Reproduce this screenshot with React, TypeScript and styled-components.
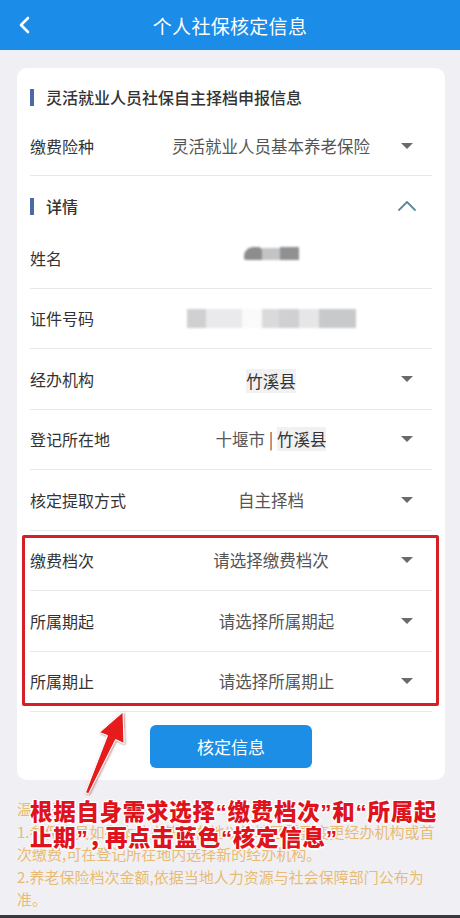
import React from "react";
import styled, { createGlobalStyle } from "styled-components";

const GlobalStyle = createGlobalStyle`
  html, body { margin: 0; padding: 0; background: #f0f0f4; }
  body { font-family: "Noto Sans CJK SC", "Noto Sans", sans-serif; }
  * { box-sizing: border-box; }
`;

const Page = styled.div`
  position: relative;
  width: 460px;
  height: 918px;
  overflow: hidden;
  background: #f0f0f4;
  display: flex;
  flex-direction: column;
`;

const Header = styled.header`
  height: 50px;
  background: #1b8ce8;
  display: grid;
  grid-template-columns: 50px 1fr 50px;
  align-items: center;
`;

const BackButton = styled.div`
  display: flex;
  align-items: center;
  justify-content: center;
  height: 50px;
`;

const Title = styled.h1`
  margin: 0;
  text-align: center;
  color: #ffffff;
  font-size: 19px;
  font-weight: 400;
  letter-spacing: 0.3px;
`;

const Card = styled.section`
  margin: 18px 15px 0 17px;
  background: #ffffff;
  border-radius: 10px;
  padding: 0 13px 12px;
  display: flex;
  flex-direction: column;
`;

const SectionHeader = styled.div<{ $pt: number; $pb: number }>`
  display: flex;
  align-items: center;
  padding: ${(p) => p.$pt}px 0 ${(p) => p.$pb}px;
`;

const SectionBar = styled.span`
  width: 4px;
  height: 17px;
  background: #4a6aa6;
  margin-right: 12px;
  flex: none;
`;

const SectionTitle = styled.span`
  flex: 1;
  font-size: 16px;
  line-height: 22px;
  font-weight: 500;
  color: #333333;
`;

const Row = styled.div<{ $h: number; $border?: boolean }>`
  height: ${(p) => p.$h}px;
  display: flex;
  align-items: center;
  border-bottom: ${(p) => (p.$border === false ? "none" : "1px solid #e8e8ea")};
`;

const Label = styled.span`
  width: 125px;
  flex: none;
  font-size: 16px;
  color: #333333;
`;

const Value = styled.span`
  flex: 1;
  display: flex;
  justify-content: center;
  align-items: center;
  font-size: 16.5px;
  color: #555555;
  white-space: nowrap;
`;

const Pasted = styled.span`
  background: #f1f1f1;
  color: #333;
`;

const CaretBox = styled.span`
  width: 40px;
  margin-right: 5px;
  flex: none;
  display: flex;
  justify-content: center;
  align-items: center;
`;

const Caret = styled.span`
  width: 0;
  height: 0;
  border-left: 6px solid transparent;
  border-right: 6px solid transparent;
  border-top: 6px solid #6a6a6a;
`;

const Redact = styled.span`
  display: flex;
  align-items: center;
  filter: blur(0.8px);
`;

const RedactBlock = styled.span<{ $w: number; $h: number; $c: string; $r?: string }>`
  display: block;
  width: ${(p) => p.$w}px;
  height: ${(p) => p.$h}px;
  background: ${(p) => p.$c};
  border-radius: ${(p) => p.$r || "0"};
`;

const HighlightGroup = styled.div`
  position: relative;
  display: flex;
  flex-direction: column;
`;

const HighlightFrame = styled.div`
  position: absolute;
  top: 4.5px;
  bottom: 6px;
  left: -8px;
  right: -7px;
  border: 3px solid #d51f27;
  border-radius: 2px;
  pointer-events: none;
`;

const ButtonWrap = styled.div`
  display: flex;
  justify-content: center;
  padding-top: 13px;
`;

const PrimaryButton = styled.button`
  width: 162px;
  height: 43px;
  border: none;
  border-radius: 6px;
  background: #1c8ee6;
  color: #ffffff;
  font-family: "Noto Sans CJK SC", sans-serif;
  font-size: 17px;
`;

const Tips = styled.div`
  padding: 18px 20px 0 17px;
  color: #e8bb74;
  font-size: 15px;
  line-height: 22.5px;
`;

const TipLine = styled.p`
  margin: 0;
`;

const BottomEdge = styled.div`
  margin-top: auto;
  height: 3px;
  background: #3a3a3a;
`;

const Annotation = styled.div`
  position: absolute;
  left: 30px;
  top: 800px;
  width: 425px;
  font-family: "Liberation Sans", "Noto Sans CJK SC", sans-serif;
  font-size: 22.5px;
  font-weight: 900;
  line-height: 25.5px;
  letter-spacing: 0.7px;
  color: #e0121b;
  text-shadow:
    1.5px 0 0 #fff, -1.5px 0 0 #fff, 0 1.5px 0 #fff, 0 -1.5px 0 #fff,
    1px 1px 0 #fff, -1px -1px 0 #fff, 1px -1px 0 #fff, -1px 1px 0 #fff;
`;

const NarrowComma = styled.span`
  letter-spacing: -6px;
`;

const ArrowSvg = styled.svg`
  position: absolute;
  left: 80px;
  top: 705px;
  overflow: visible;
`;

const BackIcon = () => (
  <svg width="14" height="18" viewBox="0 0 14 18">
    <polyline points="10,2 3,9 10,16" fill="none" stroke="#fff" strokeWidth="2.6" strokeLinecap="round" strokeLinejoin="round" />
  </svg>
);

const UpChevron = () => (
  <svg width="20" height="12" viewBox="0 0 20 12">
    <polyline points="2,10 10,2 18,10" fill="none" stroke="#5a8a99" strokeWidth="1.8" strokeLinecap="round" strokeLinejoin="round" />
  </svg>
);

type SelectRowProps = { label: string; h: number; children: React.ReactNode; border?: boolean; caret?: boolean };

const SelectRow = ({ label, h, children, border, caret = true }: SelectRowProps) => (
  <Row $h={h} $border={border}>
    <Label>{label}</Label>
    <Value>{children}</Value>
    <CaretBox>{caret ? <Caret /> : null}</CaretBox>
  </Row>
);

export default function App() {
  return (
    <>
      <GlobalStyle />
      <Page>
        <Header>
          <BackButton>
            <BackIcon />
          </BackButton>
          <Title>个人社保核定信息</Title>
          <span />
        </Header>

        <Card>
          <SectionHeader $pt={18} $pb={9}>
            <SectionBar />
            <SectionTitle>灵活就业人员社保自主择档申报信息</SectionTitle>
          </SectionHeader>
          <SelectRow label="缴费险种" h={59}>灵活就业人员基本养老保险</SelectRow>

          <SectionHeader $pt={19} $pb={11}>
            <SectionBar />
            <SectionTitle>详情</SectionTitle>
            <CaretBox>
              <UpChevron />
            </CaretBox>
          </SectionHeader>

          <SelectRow label="姓名" h={60.5} caret={false}>
            <Redact style={{ marginTop: -8 }}>
              <RedactBlock $w={18} $h={13} $c="#8d8d8d" $r="9px 4px 0 2px" />
              <RedactBlock $w={18} $h={12} $c="#c2c4c6" />
              <RedactBlock $w={19} $h={13} $c="#8f9092" />
            </Redact>
          </SelectRow>
          <SelectRow label="证件号码" h={60.5} caret={false}>
            <Redact>
              <RedactBlock $w={19} $h={19} $c="#d0d0d2" />
              <RedactBlock $w={36} $h={19} $c="#eaeaec" />
              <RedactBlock $w={20} $h={19} $c="#fafafa" />
              <RedactBlock $w={17} $h={19} $c="#dadadc" />
              <RedactBlock $w={20} $h={19} $c="#cfd0d2" />
              <RedactBlock $w={20} $h={19} $c="#e6e6e8" />
              <RedactBlock $w={37} $h={19} $c="#c8c9cb" />
            </Redact>
          </SelectRow>
          <SelectRow label="经办机构" h={60.5}>
            <Pasted style={{ marginTop: 4 }}>竹溪县</Pasted>
          </SelectRow>
          <SelectRow label="登记所在地" h={60.5}>
            十堰市 |&nbsp;<Pasted>竹溪县</Pasted>
          </SelectRow>
          <SelectRow label="核定提取方式" h={60.5}>自主择档</SelectRow>

          <HighlightGroup>
            <SelectRow label="缴费档次" h={60.5}>请选择缴费档次</SelectRow>
            <SelectRow label="所属期起" h={60.5}>&nbsp;&nbsp;&nbsp;请选择所属期起</SelectRow>
            <SelectRow label="所属期止" h={60.5}>&nbsp;&nbsp;&nbsp;请选择所属期止</SelectRow>
            <HighlightFrame />
          </HighlightGroup>

          <ButtonWrap>
            <PrimaryButton>核定信息</PrimaryButton>
          </ButtonWrap>
        </Card>

        <Tips>
          <TipLine>温馨提示：</TipLine>
          <TipLine>1.参保人员如在本地户籍所在地以外地区需要变更经办机构或首次缴费,可在登记所在地内选择新的经办机构。</TipLine>
          <TipLine>2.养老保险档次金额,依据当地人力资源与社会保障部门公布为准。</TipLine>
        </Tips>

        <BottomEdge />

        <ArrowSvg width="60" height="95" viewBox="0 0 60 95">
          <defs>
            <filter id="arrowShadow" x="-30%" y="-30%" width="160%" height="160%">
              <feDropShadow dx="0.8" dy="0.8" stdDeviation="0.8" floodColor="#600" floodOpacity="0.5" />
            </filter>
          </defs>
          <polygon
            points="43,7 19.5,27.5 27.5,30.5 5.5,87.5 8.5,88.8 35.6,34.5 44,38.5"
            fill="#e61d1d"
            stroke="#fff"
            strokeWidth="1"
            strokeLinejoin="round"
            filter="url(#arrowShadow)"
          />
        </ArrowSvg>

        <Annotation>
          根据自身需求选择“缴费档次”和“所属起
          <br />
          止期”<NarrowComma>，</NarrowComma>再点击蓝色“核定信息”
        </Annotation>
      </Page>
    </>
  );
}
